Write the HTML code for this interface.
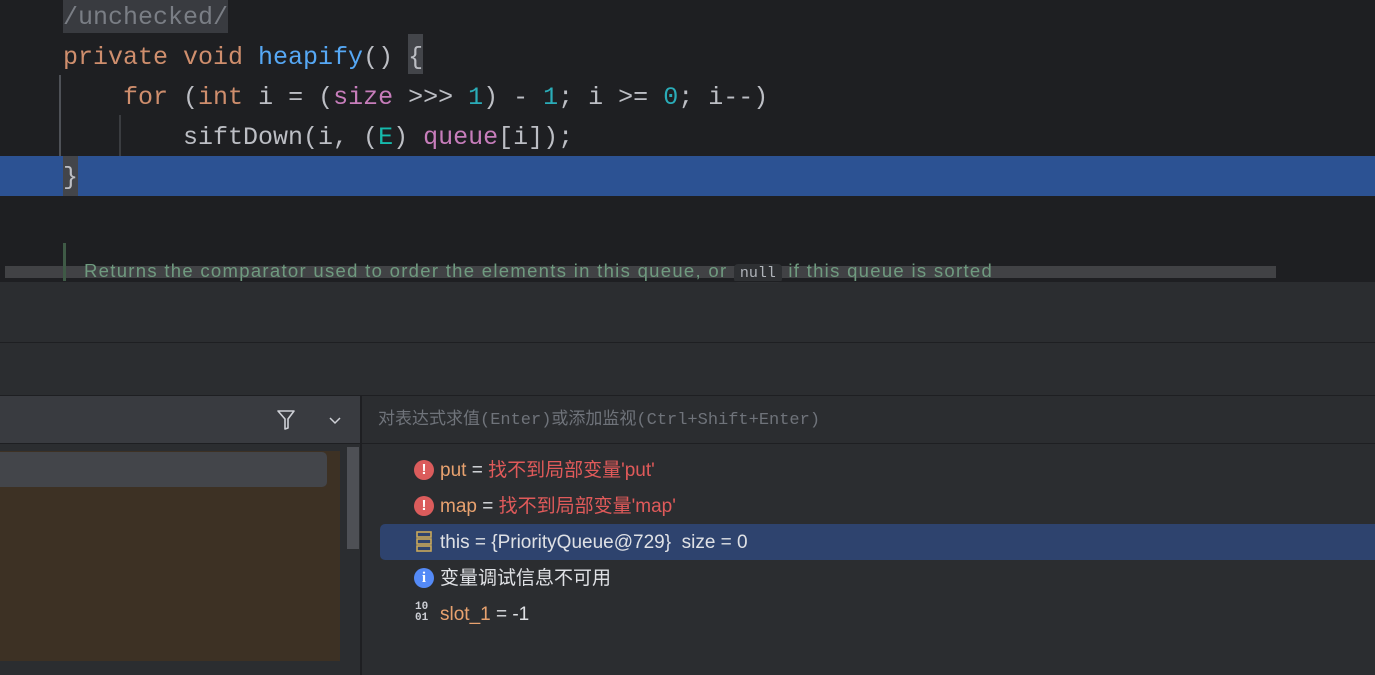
<!DOCTYPE html><html><head><meta charset="utf-8"><style>
*{margin:0;padding:0;box-sizing:border-box}
body{width:1375px;height:675px;overflow:hidden;background:#2b2d30;position:relative;font-family:"Liberation Sans","Noto Sans CJK SC",sans-serif}
.a{position:absolute}
.code{font-family:"Liberation Mono","Noto Sans CJK SC",monospace;font-size:25px;color:#bcbec4;white-space:pre;line-height:40px}
.k{color:#cf8e6d}.f{color:#56a8f5}.p{color:#c77dbb}.n{color:#2aacb8}.t{color:#16baac}
.row{position:absolute;left:414px;height:36px;line-height:38px;font-size:19px;color:#dfe1e5;white-space:nowrap}
.o{color:#e8a26f}.r{color:#e05a5a}
.ic{position:absolute;left:0;top:8px;width:20px;height:20px;border-radius:50%;color:#fff;font-weight:bold;font-size:15px;line-height:20px;text-align:center}
</style></head><body>
<div class="a" style="left:0;top:0;width:1375px;height:281px;background:#1e1f22"></div>
<div class="a" style="left:63px;top:0;width:165px;height:33px;background:#393b40"></div>
<div class="a" style="left:408px;top:34px;width:15px;height:40px;background:#43454a"></div>
<div class="a" style="left:0;top:156px;width:1375px;height:40px;background:#2c5293"></div>
<div class="a" style="left:63px;top:156px;width:15px;height:40px;background:#43454a"></div>
<div class="a" style="left:59px;top:75px;width:2px;height:81px;background:#4e5157"></div>
<div class="a" style="left:119px;top:115px;width:2px;height:41px;background:#3a3c40"></div>
<div class="a code" style="left:63px;top:-2px"><span style="color:#7a7e85">/unchecked/</span>
<span class="k">private void </span><span class="f">heapify</span>() {
    <span class="k">for </span>(<span class="k">int</span> i = (<span class="p">size</span> &gt;&gt;&gt; <span class="n">1</span>) - <span class="n">1</span>; i &gt;= <span class="n">0</span>; i--)
        siftDown(i, (<span class="t">E</span>) <span class="p">queue</span>[i]);
}</div>
<div class="a" style="left:5px;top:266px;width:1271px;height:12px;background:#414245"></div>
<div class="a" style="left:63px;top:243px;width:3px;height:38px;background:#3f5a46"></div>
<div class="a" style="left:84px;top:259px;font-size:18.5px;letter-spacing:1.3px;color:#6f9a7f;white-space:nowrap;line-height:24px">Returns the comparator used to order the elements in this queue, or <span style="font-family:'Liberation Mono',monospace;font-size:15px;letter-spacing:0;background:#2e3033;color:#b0b4ba;padding:1px 6px;border-radius:4px">null</span> if this queue is sorted</div>
<div class="a" style="left:0;top:281px;width:1375px;height:1px;background:#1e1f22"></div>
<div class="a" style="left:0;top:342px;width:1375px;height:1px;background:#1e1f22"></div>
<div class="a" style="left:0;top:395px;width:1375px;height:1px;background:#1e1f22"></div>
<div class="a" style="left:0;top:396px;width:360px;height:47px;background:#393b40"></div>
<div class="a" style="left:360px;top:396px;width:2px;height:279px;background:#1e1f22"></div>
<div class="a" style="left:0;top:443px;width:1375px;height:1px;background:#1e1f22"></div>
<svg class="a" style="left:276px;top:409px" width="20" height="22" viewBox="0 0 20 22"><path d="M2 2H18L12 10V19L9 20V10Z" fill="none" stroke="#ced0d6" stroke-width="1.6" stroke-linejoin="round"/></svg>
<svg class="a" style="left:328px;top:415px" width="14" height="10"><path d="M2 3L7 8L12 3" fill="none" stroke="#ced0d6" stroke-width="1.5"/></svg>
<div class="a" style="left:378px;top:409px;font-family:'Liberation Mono','Noto Sans CJK SC',monospace;font-size:17px;color:#6f737a;line-height:24px">对表达式求值(Enter)或添加监视(Ctrl+Shift+Enter)</div>
<div class="a" style="left:0;top:451px;width:340px;height:210px;background:#3d3124"></div>
<div class="a" style="left:0;top:452px;width:327px;height:35px;background:#43454a;border-radius:0 5px 5px 0"></div>
<div class="a" style="left:347px;top:447px;width:12px;height:102px;background:#4e5055"></div>
<div class="a" style="left:380px;top:524px;width:995px;height:36px;background:#2e436e;border-radius:5px 0 0 5px"></div>
<div class="row" style="top:452px;padding-left:26px"><div class="ic" style="background:#db5c5c">!</div><span class="o">put</span> = <span class="r">找不到局部变量'put'</span></div>
<div class="row" style="top:488px;padding-left:26px"><div class="ic" style="background:#db5c5c">!</div><span class="o">map</span> = <span class="r">找不到局部变量'map'</span></div>
<div class="row" style="top:524px;padding-left:26px"><svg class="a" style="left:2px;top:7px" width="16" height="22"><rect x="1" y="1" width="14" height="5" fill="none" stroke="#c9a85a" stroke-width="1.6"/><rect x="1" y="8" width="14" height="5" fill="none" stroke="#c9a85a" stroke-width="1.6"/><rect x="1" y="15" width="14" height="5" fill="none" stroke="#c9a85a" stroke-width="1.6"/></svg>this = {PriorityQueue@729}&nbsp; size = 0</div>
<div class="row" style="top:560px;padding-left:26px"><div class="ic" style="background:#548af7;font-family:'Liberation Serif',serif">i</div>变量调试信息不可用</div>
<div class="row" style="top:596px;padding-left:26px"><div class="a" style="left:1px;top:6px;font-size:11px;line-height:11px;font-weight:bold;color:#ced0d6;font-family:'Liberation Mono',monospace">10<br>01</div><span class="o">slot_1</span> = -1</div>
</body></html>
